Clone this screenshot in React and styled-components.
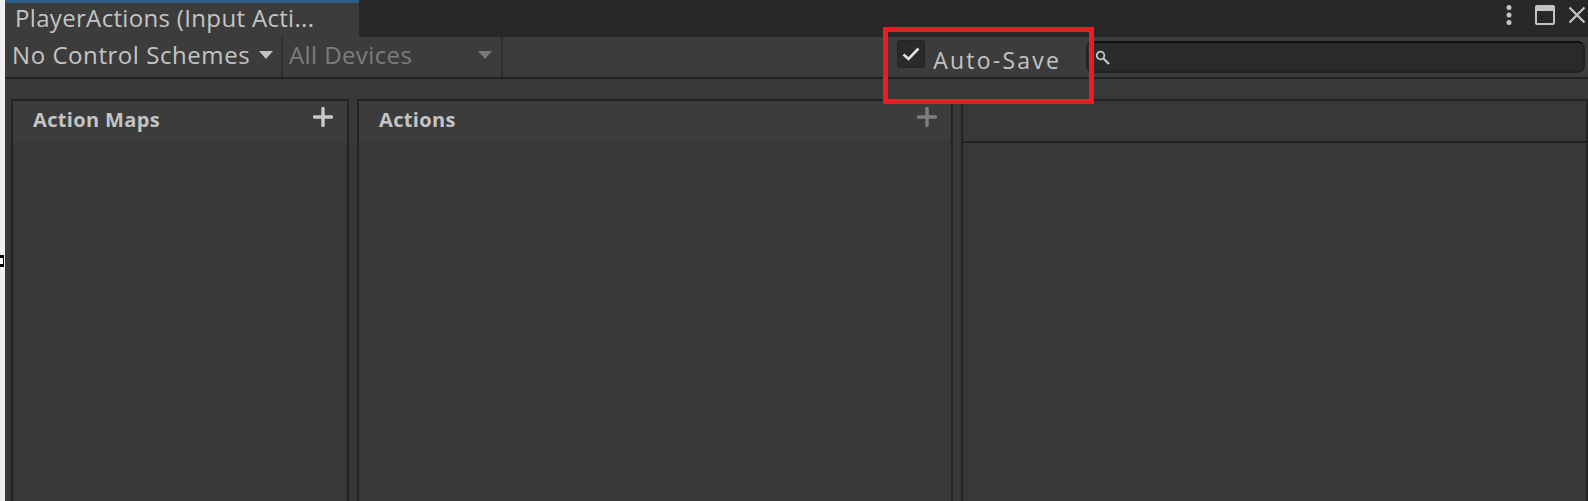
import React from "react"
import styled, { createGlobalStyle } from "styled-components"

const GlobalStyle = createGlobalStyle`
  html, body {
    margin: 0;
    padding: 0;
    background: #f0f0f0;
  }
  * {
    box-sizing: border-box;
  }
`

const Caret = ({ dim }) => (
  <CaretIcon viewBox="0 0 14 8" $dim={dim}>
    <path d="M0 0h14L7 8z" fill="currentColor" />
  </CaretIcon>
)

const PlusIcon = ({ dim }) => (
  <AddIcon viewBox="0 0 20 20" $dim={dim}>
    <path d="M10 1.5v17M1.5 10h17" stroke="currentColor" strokeWidth="3.4" strokeLinecap="round" />
  </AddIcon>
)

const App = () => {
  return (
    <Page>
      <GlobalStyle />
      <EdgeStrip>
        <EdgeMarker />
      </EdgeStrip>
      <Editor>
        <TabBar>
          <Tab>PlayerActions (Input Acti...</Tab>
          <WindowButtons>
            <MenuDots viewBox="0 0 8 20" width="8" height="20">
              <circle cx="4" cy="2.5" r="2.5" fill="#c4c4c4" />
              <circle cx="4" cy="10" r="2.5" fill="#c4c4c4" />
              <circle cx="4" cy="17.5" r="2.5" fill="#c4c4c4" />
            </MenuDots>
            <WindowIcon viewBox="0 0 20 20" width="20" height="20">
              <rect x="1" y="1" width="18" height="18" rx="1" fill="none" stroke="#c4c4c4" strokeWidth="2" />
              <rect x="1" y="1" width="18" height="5" fill="#c4c4c4" />
            </WindowIcon>
            <WindowIcon viewBox="0 0 18 18" width="18" height="18">
              <path d="M1.5 1.5l15 15M16.5 1.5l-15 15" stroke="#c4c4c4" strokeWidth="2.2" />
            </WindowIcon>
          </WindowButtons>
        </TabBar>
        <Toolbar>
          <SchemeDropdown>
            <ToolbarLabel>No Control Schemes</ToolbarLabel>
            <Caret />
          </SchemeDropdown>
          <DeviceDropdown>
            <ToolbarLabel $dim>All Devices</ToolbarLabel>
            <Caret dim />
          </DeviceDropdown>
          <ToolbarSpacer />
          <AutoSave>
            <CheckBox>
              <svg viewBox="0 0 18 14" width="18" height="14">
                <path d="M1.5 7.5l5 4.5L16.5 1.5" fill="none" stroke="#e2e2e2" strokeWidth="2.6" />
              </svg>
            </CheckBox>
            <AutoSaveLabel>Auto-Save</AutoSaveLabel>
          </AutoSave>
          <SearchField>
            <svg viewBox="0 0 15 15" width="15" height="15">
              <circle cx="5.5" cy="5.5" r="3.8" fill="none" stroke="#c8c8c8" strokeWidth="1.8" />
              <path d="M8.5 8.5l5.5 5.5" stroke="#c8c8c8" strokeWidth="2.2" />
            </svg>
          </SearchField>
        </Toolbar>
        <Panels>
          <MapsPanel>
            <PanelHeader>
              <PanelTitle>Action Maps</PanelTitle>
              <PlusIcon />
            </PanelHeader>
          </MapsPanel>
          <ActionsPanel>
            <PanelHeader>
              <PanelTitle>Actions</PanelTitle>
              <PlusIcon dim />
            </PanelHeader>
          </ActionsPanel>
          <PropertiesPanel>
            <PropertiesHeader />
          </PropertiesPanel>
        </Panels>
      </Editor>
      <Annotation />
    </Page>
  )
}

const Page = styled.div`
  position: relative;
  display: flex;
  width: 1588px;
  height: 501px;
  overflow: hidden;
  font-family: "Open Sans", "Noto Sans", sans-serif;
`

const EdgeStrip = styled.div`
  position: relative;
  width: 5px;
  background: #f0f0f0;
`

const EdgeMarker = styled.div`
  position: absolute;
  left: 0;
  top: 255px;
  width: 4px;
  height: 12px;
  border-style: solid;
  border-color: #000;
  border-width: 3px 1px 3px 0;
  background: #fff;
`

const Editor = styled.div`
  flex: 1;
  display: flex;
  flex-direction: column;
  min-width: 0;
  background: #383838;
`

const TabBar = styled.div`
  display: flex;
  justify-content: space-between;
  height: 37px;
  background: #282828;
`

const Tab = styled.div`
  width: 354px;
  padding-left: 10px;
  border-top: 3px solid #2c5d87;
  background: #3c3c3c;
  color: #c4c4c4;
  font-size: 24px;
  letter-spacing: 0.33px;
  line-height: 30px;
  white-space: nowrap;
`

const WindowButtons = styled.div`
  display: flex;
  align-items: center;
  gap: 13px;
  padding: 0 2px 7px 0;
`

const WindowIcon = styled.svg`
  display: block;
`

const MenuDots = styled(WindowIcon)`
  margin-right: 9px;
`

const Toolbar = styled.div`
  display: flex;
  align-items: stretch;
  height: 42px;
  background: #3c3c3c;
  border-bottom: 2px solid #232323;
`

const SchemeDropdown = styled.div`
  display: flex;
  align-items: center;
  width: 278px;
  padding: 0 9px 4px 7px;
  gap: 9px;
  border-right: 2px solid #2c2c2c;
`

const DeviceDropdown = styled.div`
  display: flex;
  align-items: center;
  justify-content: space-between;
  width: 220px;
  padding: 0 9px 4px 6px;
  border-right: 2px solid #2c2c2c;
`

const ToolbarLabel = styled.span`
  color: ${props => (props.$dim ? "#7c7c7c" : "#c4c4c4")};
  font-size: 24px;
  letter-spacing: ${props => (props.$dim ? "0.4px" : "0.56px")};
  line-height: 36px;
  white-space: nowrap;
`

const CaretIcon = styled.svg`
  flex: none;
  width: 14px;
  height: 8px;
  color: ${props => (props.$dim ? "#787878" : "#c4c4c4")};
`

const ToolbarSpacer = styled.div`
  flex: 1;
`

const AutoSave = styled.div`
  display: flex;
  align-items: flex-start;
  gap: 8px;
  padding-top: 3px;
  margin-right: 25px;
`

const CheckBox = styled.div`
  display: flex;
  align-items: center;
  justify-content: center;
  width: 28px;
  height: 28px;
  border-radius: 3px;
  border: 1px solid #242424;
  background: #2a2a2a;
`

const AutoSaveLabel = styled.span`
  color: #c4c4c4;
  font-size: 23px;
  line-height: 34px;
  letter-spacing: 2.2px;
  margin-top: 3px;
  white-space: nowrap;
`

const SearchField = styled.div`
  display: flex;
  align-items: center;
  align-self: flex-start;
  width: 499px;
  height: 32px;
  margin: 4px 3px 0 0;
  padding-left: 7px;
  border-radius: 7px;
  border: 2px solid #232323;
  border-top-color: #111;
  background: #2a2a2a;
`

const Panels = styled.div`
  flex: 1;
  display: flex;
  gap: 8px;
  padding: 20px 0 0 6px;
  min-height: 0;
`

const Panel = styled.div`
  display: flex;
  flex-direction: column;
  border: 2px solid #232323;
  border-bottom: none;
`

const MapsPanel = styled(Panel)`
  width: 338px;
`

const ActionsPanel = styled(Panel)`
  width: 596px;
`

const PropertiesPanel = styled(Panel)`
  flex: 1;
`

const PanelHeader = styled.div`
  display: flex;
  align-items: flex-start;
  justify-content: space-between;
  height: 40px;
  padding: 6px 14px 0 20px;
  background: #3c3c3c;
`

const PropertiesHeader = styled.div`
  height: 42px;
  border-bottom: 2px solid #232323;
`

const PanelTitle = styled.span`
  color: #c4c4c4;
  font-size: 20px;
  font-weight: 700;
  letter-spacing: 0.35px;
  line-height: 26px;
`

const AddIcon = styled.svg`
  width: 20px;
  height: 20px;
  color: ${props => (props.$dim ? "#7e7e7e" : "#c8c8c8")};
`

const Annotation = styled.div`
  position: absolute;
  left: 883px;
  top: 27px;
  width: 211px;
  height: 77px;
  border: 5px solid #ed1c24;
  pointer-events: none;
`

export default App
